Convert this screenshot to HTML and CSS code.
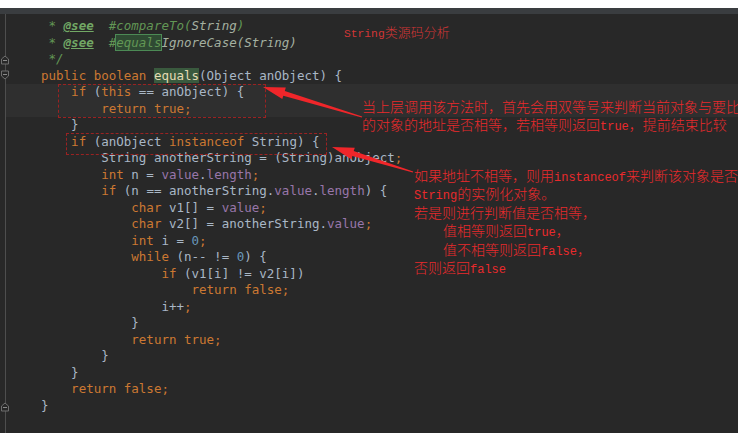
FILE: index.html
```html
<!DOCTYPE html>
<html lang="zh">
<head>
<meta charset="utf-8">
<title>String equals</title>
<link rel="stylesheet" href="styles.css">
</head>
<body>
<div class="topwhite"></div>
<div class="tabstrip"></div>
<div class="editor">
  <div class="gutter"></div>
  <div class="code">
    <div class="ln"><span class="dc"> * </span><span class="tag">@see</span><span class="dc">  #compareTo(</span><span class="dref">String</span><span class="dc">)</span></div>
    <div class="ln"><span class="dc"> * </span><span class="tag">@see</span><span class="dc">  #</span><span class="found">equals</span><span class="dref">IgnoreCase(String)</span></div>
    <div class="ln"><span class="dc"> */</span></div>
    <div class="ln"><span class="kw">public boolean </span><span class="mdecl">equals</span>(Object anObject) {</div>
    <div class="ln hl">    <span class="kw">if</span> (<span class="kw">this</span> == anObject) {</div>
    <div class="ln hl">        <span class="kw">return true;</span></div>
    <div class="ln">    }</div>
    <div class="ln">    <span class="kw">if</span> (anObject <span class="kw">instanceof</span> String) {</div>
    <div class="ln">        String anotherString = (String)anObject<span class="kw">;</span></div>
    <div class="ln">        <span class="kw">int</span> n = <span class="fld">value</span>.<span class="fld">length</span><span class="kw">;</span></div>
    <div class="ln">        <span class="kw">if</span> (n == anotherString.<span class="fld">value</span>.<span class="fld">length</span>) {</div>
    <div class="ln">            <span class="kw">char</span> v1[] = <span class="fld">value</span><span class="kw">;</span></div>
    <div class="ln">            <span class="kw">char</span> v2[] = anotherString.<span class="fld">value</span><span class="kw">;</span></div>
    <div class="ln">            <span class="kw">int</span> i = <span class="num">0</span><span class="kw">;</span></div>
    <div class="ln">            <span class="kw">while</span> (n-- != <span class="num">0</span>) {</div>
    <div class="ln">                <span class="kw">if</span> (v1[i] != v2[i])</div>
    <div class="ln">                    <span class="kw">return false;</span></div>
    <div class="ln">                i++<span class="kw">;</span></div>
    <div class="ln">            }</div>
    <div class="ln">            <span class="kw">return true;</span></div>
    <div class="ln">        }</div>
    <div class="ln">    }</div>
    <div class="ln">    <span class="kw">return false;</span></div>
    <div class="ln">}</div>
  </div>

  <svg class="folds" width="12" height="419" viewBox="0 0 12 419">
    <path d="M1.5 50 V45 L5 42 L8.5 45 V50 Z" fill="#282828" stroke="#6f6f6f"/>
    <path d="M3 46.5 H7" stroke="#8a8a8a"/>
    <path d="M1.5 57 V62 L5 65 L8.5 62 V57 Z" fill="#282828" stroke="#6f6f6f"/>
    <path d="M3 60.5 H7" stroke="#8a8a8a"/>
    <path d="M1.5 397 V392 L5 389 L8.5 392 V397 Z" fill="#282828" stroke="#6f6f6f"/>
    <path d="M3 393.5 H7" stroke="#8a8a8a"/>
  </svg>

  <div class="box box1"></div>
  <div class="box box2"></div>

  <svg class="arrows" width="738" height="419" viewBox="0 0 738 419">
    <polygon fill="#f0262a" points="362.2,102.4 284.8,77.0 285.8,73.6 263,73 282.3,85.1 283.3,81.8 361.8,103.6"/>
    <polygon fill="#f0262a" points="413.2,157.4 353.7,137.1 354.8,133.8 332,133 351.2,145.2 352.3,141.9 412.8,158.6"/>
  </svg>

  <div class="note title"><span class="lat">String</span>类源码分析</div>
  <div class="note n1">
    <div class="nl">当上层调用该方法时，首先会用双等号来判断当前对象与要比较</div>
    <div class="nl">的对象的地址是否相等，若相等则返回<span class="lat">true</span>，提前结束比较</div>
  </div>
  <div class="note n2">
    <div class="nl">如果地址不相等，则用<span class="lat">instanceof</span>来判断该对象是否是</div>
    <div class="nl"><span class="lat">String</span>的实例化对象。</div>
    <div class="nl">若是则进行判断值是否相等，</div>
    <div class="nl ind">值相等则返回<span class="lat">true</span>，</div>
    <div class="nl ind">值不相等则返回<span class="lat">false</span>，</div>
    <div class="nl">否则返回<span class="lat">false</span></div>
  </div>
</div>
</body>
</html>
```

FILE: styles.css
```css
html, body {
  margin: 0;
  padding: 0;
  background: #ffffff;
  width: 738px;
  height: 433px;
  overflow: hidden;
}

.topwhite {
  height: 8px;
  background: #ffffff;
}

.tabstrip {
  height: 6px;
  background: #3a3d40;
}

.editor {
  position: relative;
  display: flex;
  height: 419px;
  background: #282828;
  overflow: hidden;
}

.gutter {
  width: 5px;
  flex: none;
  border-right: 1px solid #4e4e4e;
}

.code {
  flex: 1;
  padding-top: 4px;
  font-family: "DejaVu Sans Mono", "Liberation Mono", monospace;
  font-size: 12.5px;
  line-height: 16.5px;
  color: #a9b7c6;
}

.ln {
  height: 16.5px;
  padding-left: 35px;
  white-space: pre;
}

.hl {
  background: #2f2f2f;
}

.kw { color: #cc7832; }
.fld { color: #9876aa; }
.num { color: #6897bb; }
.dc { color: #629755; font-style: italic; }
.dref { color: #a4b0a0; font-style: italic; }
.tag {
  color: #72a865;
  font-style: italic;
  font-weight: bold;
  text-decoration: underline;
}
.found {
  color: #629755;
  font-style: italic;
  background: #2f4a33;
  outline: 1px solid #4c8a55;
}
.mdecl {
  color: #e4dcb4;
  background: #3a5a3e;
}

.folds {
  position: absolute;
  left: 0;
  top: 0;
}

.box {
  position: absolute;
  border: 1px dashed #9a2222;
}
.box1 {
  left: 58px;
  top: 70px;
  width: 206px;
  height: 32px;
}
.box2 {
  left: 66px;
  top: 119px;
  width: 259px;
  height: 20px;
}

.arrows {
  position: absolute;
  left: 0;
  top: 0;
}

.note {
  position: absolute;
  font-family: "Noto Sans CJK SC", sans-serif;
  font-weight: 300;
  color: #ea2a2c;
  white-space: nowrap;
}
.note .lat {
  font-family: "Liberation Mono", monospace;
  font-size: 12px;
  line-height: 1;
}
.nl {
  overflow: visible;
}

.title {
  left: 344px;
  top: 10px;
  font-size: 13px;
  line-height: 16px;
  color: #d23636;
}
.title .lat {
  font-size: 11.3px;
}

.n1 {
  left: 362px;
  top: 83px;
  font-size: 14px;
  line-height: 18px;
}
.n1 .nl {
  height: 18px;
}

.n2 {
  left: 414px;
  top: 152px;
  font-size: 14px;
  line-height: 18.4px;
}
.n2 .nl {
  height: 18.4px;
}
.n2 .ind {
  padding-left: 29px;
}
```
